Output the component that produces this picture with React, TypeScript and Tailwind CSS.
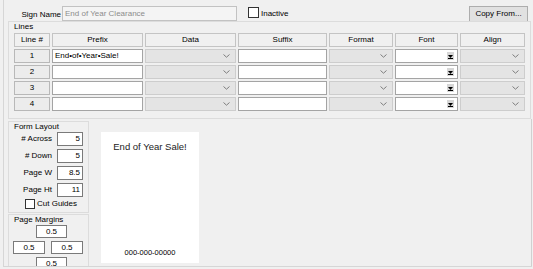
import React from 'react';

const cols = 'grid grid-cols-[38px_93px_93px_91px_66px_65px_67px]';
const headers = ['Line #', 'Prefix', 'Data', 'Suffix', 'Format', 'Font', 'Align'];

function Chevron() {
  return (
    <svg width="7" height="4" viewBox="0 0 7 4" className="mr-[5px]">
      <path d="M0.5 0.5 L3.5 3.2 L6.5 0.5" fill="none" stroke="#7d7d7d" strokeWidth="1" />
    </svg>
  );
}

function GrayCombo() {
  return (
    <div className="p-[1px]">
      <div className="h-[14px] border border-[#cdcdcd] bg-[#e4e4e4] flex items-center justify-end">
        <Chevron />
      </div>
    </div>
  );
}

function WhiteBox({ text }: { text?: string }) {
  return (
    <div className="p-[1px]">
      <div className="h-[14px] border border-[#a4a4a4] bg-white flex items-center pl-[2px] whitespace-nowrap">
        {text}
      </div>
    </div>
  );
}

function FontCombo() {
  return (
    <div className="p-[1px]">
      <div className="h-[14px] border border-[#a4a4a4] bg-white flex items-center justify-end pr-[3px]">
        <svg width="7" height="8" viewBox="0 0 7 8">
          <rect x="0" y="0" width="7" height="8" fill="#d6d6d6" />
          <path d="M1 3 L6 3 L3.5 6 Z" fill="#000" />
          <rect x="1" y="6" width="5" height="1" fill="#000" />
        </svg>
      </div>
    </div>
  );
}

function LineRow({ n, prefix }: { n: number; prefix?: string }) {
  return (
    <div className={cols}>
      <div className="p-[1px]">
        <div className="h-[14px] border border-[#b8b8b8] bg-[#ececec] flex items-center justify-center">{n}</div>
      </div>
      <WhiteBox text={prefix} />
      <GrayCombo />
      <WhiteBox />
      <GrayCombo />
      <FontCombo />
      <GrayCombo />
    </div>
  );
}

function NumField({ label, value }: { label: string; value: string }) {
  return (
    <div className="flex items-center h-[14px] mb-[3px]">
      <span className="w-[43px] text-right">{label}</span>
      <div className="ml-[5px] w-[26px] h-[14px] border border-[#7a7a7a] bg-white text-right pr-[2px] leading-[12px]">
        {value}
      </div>
    </div>
  );
}

function MarginField({ className }: { className?: string }) {
  return (
    <div className={`h-[13px] border border-[#7a7a7a] bg-white text-center leading-[11px] ${className ?? ''}`}>0.5</div>
  );
}

export default function App() {
  return (
    <div
      className="w-[533px] h-[269px] bg-[#f0f0f0] overflow-hidden text-[8px] text-black"
      style={{ fontFamily: '"Liberation Sans", Arial, sans-serif' }}
    >
      <div className="ml-[3px] w-[529px] h-[267px] border-l border-b border-[#d6d6d6] flex flex-col">
        {/* sign name row */}
        <div className="flex items-start h-[21px] pt-[6px]">
          <span className="w-[57px] text-right pt-[3px]">Sign Name</span>
          <div className="ml-[1px] w-[175px] h-[15px] border border-[#c2c2c2] bg-[#f4f4f4] text-[#8c8c8c] pl-[2px] leading-[13px]">
            End of Year Clearance
          </div>
          <div className="ml-[11px] mt-[1px] w-[11px] h-[11px] border border-[#333] bg-white" />
          <span className="ml-[2px] mt-[2px]">Inactive</span>
          <div className="ml-auto mr-[4px] w-[59px] h-[16px] border border-[#adadad] bg-[#e1e1e1] flex items-center justify-center">
            Copy From...
          </div>
        </div>

        {/* lines group */}
        <div className="ml-[4px] w-[523px] border border-[#dcdcdc] pl-[4px] pb-[6px]">
          <div className="h-[10px] pl-[1px] leading-[10px]">Lines</div>
          <div className={cols}>
            {headers.map((h) => (
              <div key={h} className="p-[1px]">
                <div className="h-[14px] border border-[#c4c4c4] bg-[#f0f0f0] flex items-center justify-center">{h}</div>
              </div>
            ))}
          </div>
          <LineRow n={1} prefix="End•of•Year•Sale!" />
          <LineRow n={2} />
          <LineRow n={3} />
          <LineRow n={4} />
        </div>

        {/* lower panel */}
        <div className="w-[528px] flex-1 border-r border-[#d0d0d0] overflow-hidden flex">
          <div className="ml-[4px] w-[81px] flex flex-col">
            <div className="mt-[2px] border border-[#dcdcdc] pb-[2px]">
              <div className="h-[10px] pl-[5px] leading-[10px]">Form Layout</div>
              <NumField label="# Across" value="5" />
              <NumField label="# Down" value="5" />
              <NumField label="Page W" value="8.5" />
              <NumField label="Page Ht" value="11" />
              <div className="flex items-center -mt-[2px] ml-[16px]">
                <div className="w-[10px] h-[10px] border border-[#333] bg-white" />
                <span className="ml-[2px]">Cut Guides</span>
              </div>
            </div>
            <div className="mt-[1px] border border-[#dcdcdc] pb-[3px]">
              <div className="h-[10px] pl-[5px] leading-[10px]">Page Margins</div>
              <MarginField className="ml-[27px] w-[31px]" />
              <div className="flex mt-[3px]">
                <MarginField className="ml-[4px] w-[32px]" />
                <MarginField className="ml-[6px] w-[32px]" />
              </div>
              <MarginField className="ml-[27px] w-[31px] mt-[3px]" />
            </div>
          </div>

          <div className="ml-[12px] mt-[13px] w-[98px] h-[131px] bg-white flex flex-col items-center justify-between pt-[8px] pb-[5px]">
            <span className="text-[9.5px] text-[#222]">End of Year Sale!</span>
            <span className="text-[7.5px]">000-000-00000</span>
          </div>
        </div>
      </div>
    </div>
  );
}
